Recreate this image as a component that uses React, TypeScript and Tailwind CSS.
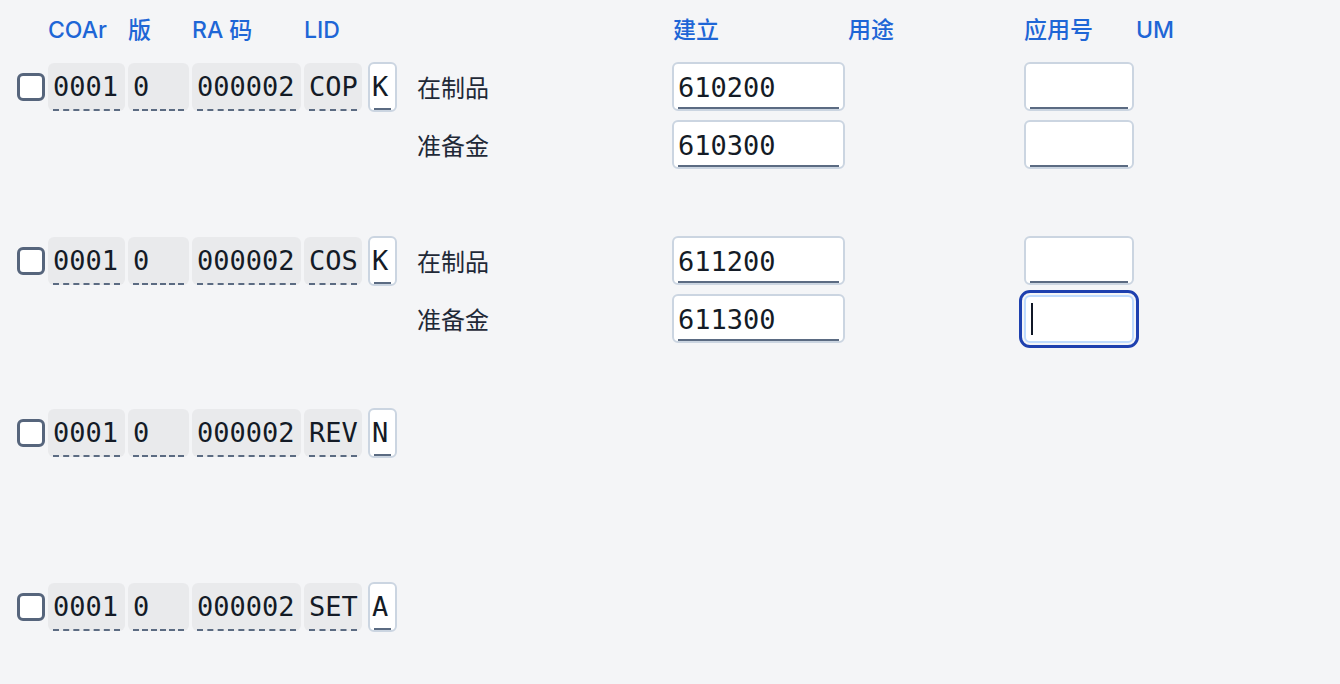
import React from "react";

type Row = {
  lid: string;
  code: string;
  height: string;
  lines: { label: string; value: string; focused?: boolean }[];
};

const rows: Row[] = [
  {
    lid: "COP",
    code: "K",
    height: "h-[174px]",
    lines: [
      { label: "在制品", value: "610200" },
      { label: "准备金", value: "610300" },
    ],
  },
  {
    lid: "COS",
    code: "K",
    height: "h-[172px]",
    lines: [
      { label: "在制品", value: "611200" },
      { label: "准备金", value: "611300", focused: true },
    ],
  },
  { lid: "REV", code: "N", height: "h-[174px]", lines: [] },
  { lid: "SET", code: "A", height: "h-[100px]", lines: [] },
];

const mono = "font-['DejaVu_Sans_Mono',monospace] text-[27px] text-[#141b26]";

function Cell({ text, w, last }: { text: string; w: string; last?: boolean }) {
  return (
    <div className={`${w} h-12 rounded-md bg-[#e9eaec] flex flex-col justify-between px-[5px] ${last ? "" : "mr-[3px]"}`}>
      <span className={`${mono} leading-none pt-[10px]`}>{text}</span>
      <span className="block border-b-2 border-dashed border-[#5b6b82]" />
    </div>
  );
}

function CodeBox({ text }: { text: string }) {
  return (
    <div className="w-[29px] h-[50px] ml-[6px] rounded-md border-2 border-[#cbd5e1] bg-white flex flex-col justify-between px-[2px]">
      <span className={`${mono} leading-none pt-[9px]`}>{text}</span>
      <span className="block border-b-2 border-[#5b6b82] mx-[2px]" />
    </div>
  );
}

function Input({ value, w, focused }: { value: string; w: string; focused?: boolean }) {
  if (focused) {
    return (
      <div className={`${w} h-12 rounded-md border-2 border-[#bfdbfe] bg-white outline-[3px] outline-solid outline-[#1e40af] outline-offset-[2px] flex items-center pl-[5px]`}>
        <span className="block w-[2px] h-[32px] bg-[#111827]" />
      </div>
    );
  }
  return (
    <div className={`${w} h-[49px] rounded-md border-2 border-[#cbd5e1] bg-white flex flex-col justify-between`}>
      <span className={`${mono} leading-none pt-[10px] pl-[4px]`}>{value}</span>
      <span className="block border-b-2 border-[#5b6b82] mx-[4px]" />
    </div>
  );
}

export default function App() {
  return (
    <div className="min-h-screen w-full bg-[#f4f5f7] font-['Inter','Noto_Sans_CJK_SC',sans-serif] overflow-hidden">
      {/* Header */}
      <div className="h-[60px] flex items-center pl-[48px] text-[23px] font-medium text-[#1e66d6]">
        <span className="w-[80px]">COAr</span>
        <span className="w-[64px]">版</span>
        <span className="w-[112px]">RA 码</span>
        <span className="w-[369px]">LID</span>
        <span className="w-[175px]">建立</span>
        <span className="w-[176px]">用途</span>
        <span className="w-[112px]">应用号</span>
        <span>UM</span>
      </div>

      <div className="mt-[2px]">
        {rows.map((r, i) => (
          <div key={i} className={`${r.height} flex items-start`}>
            <div className="flex items-center pl-[17px]">
              <span className="w-[28px] h-[28px] mr-[3px] rounded-[6px] border-[3px] border-[#56657c] bg-white" />
              <Cell text="0001" w="w-[77px]" />
              <Cell text="0" w="w-[61px]" />
              <Cell text="000002" w="w-[109px]" />
              <Cell text={r.lid} w="w-[58px]" last />
              <CodeBox text={r.code} />
            </div>
            <div className="flex flex-col gap-[9px] ml-[20px]">
              {r.lines.map((l, j) => (
                <div key={j} className="flex items-center">
                  <span className="w-[255px] text-[24px] text-[#1f2937] font-['Noto_Sans_CJK_SC',sans-serif]">
                    {l.label}
                  </span>
                  <Input value={l.value} w="w-[173px]" />
                  <div className="w-[179px]" />
                  <Input value="" w="w-[110px]" focused={l.focused} />
                </div>
              ))}
            </div>
          </div>
        ))}
      </div>
    </div>
  );
}
